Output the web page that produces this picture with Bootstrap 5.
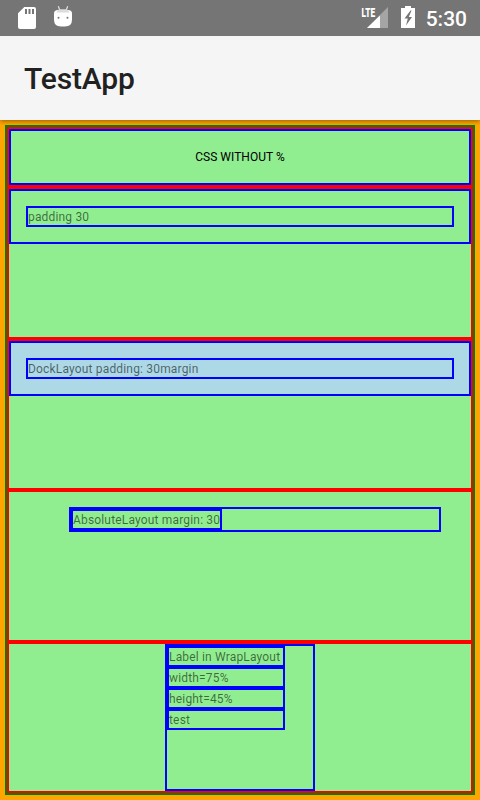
<!DOCTYPE html>
<html lang="en">
<head>
<meta charset="utf-8">
<meta name="viewport" content="width=device-width, initial-scale=1">
<title>TestApp</title>
<link href="https://cdn.jsdelivr.net/npm/bootstrap@5.3.0/dist/css/bootstrap.min.css" rel="stylesheet">
<style>
  body { font-family: Roboto, sans-serif; font-size: 12px; line-height: 17px; background: orange; color: #212121; }
  .screen { height: 800px; width: 480px; }
  .status-bar { height: 36px; background: #757575; z-index: 2; }
  .status-bar svg { display: block; }
  .clock { font-size: 21px; font-weight: 500; line-height: 38px; color: #fff; }
  .clock span { padding-right: 13px; }
  .app-bar { height: 84px; background: #f5f5f5; padding-left: 24px; padding-top: 2px; box-shadow: 0 1px 5px rgba(0,0,0,.45); }
  .app-title { font-size: 30px; font-weight: 500; line-height: 36px; letter-spacing: -.15px; }
  .page-area { padding: 5px; }
  .stack { border: 2px solid green; }
  .cell { border: 2px solid red; background: lightgreen; }
  .cell-button { height: 60px; }
  .cell-a { height: 152px; }
  .cell-b { height: 151px; }
  .outlined { border: 2px solid blue; }
  .btn-flat { width: 100%; height: 100%; padding: 0; background: none; font-size: 12px; line-height: 17px; letter-spacing: .04px; color: #000; }
  .inset { padding: 15px; }
  .dock { background: lightblue; }
  .lbl { height: 21px; line-height: 19px; letter-spacing: .17px; color: rgba(0,0,0,.57); white-space: nowrap; }
  .abs-box { margin: 15px 30px 0 60px; }
  .abs-box .lbl { width: 151px; }
  .wrap-box { width: 150px; height: 147px; }
  .wrap-box .lbl { width: 118px; }
</style>
<script defer src="https://cdn.jsdelivr.net/npm/bootstrap@5.3.0/dist/js/bootstrap.bundle.min.js"></script>
</head>
<body>
<div class="screen d-flex flex-column overflow-hidden">
  <div class="status-bar position-relative d-flex flex-shrink-0 justify-content-between">
    <svg width="90" height="36" viewBox="0 0 90 36" aria-hidden="true">
      <path fill="#fff" fill-rule="evenodd" d="M24.300 7H34a2 2 0 0 1 2 2v18a2 2 0 0 1-2 2H20a2 2 0 0 1-2-2V13.300zM25 9v5h2V9zM28.500 9v5h2V9zM32 9v5h2V9z"/>
      <path d="M58.300 6.200l1.500 4M67.700 6.200l-1.500 4" stroke="#e0e0e0" stroke-width="1.200" fill="none"/>
      <path fill="#fff" d="M54 13.500q0-3.500 4-3.500h10q4 0 4 3.500v6q0 7-7 7h-4q-7 0-7-7z"/>
      <path fill="#dcdcdc" d="M56.500 12.500q1-3.200 4-3.200h5q3 0 4 3.200z"/>
      <circle cx="58.500" cy="17.800" r="1" fill="#757575"/><circle cx="67.500" cy="17.800" r="1" fill="#757575"/>
    </svg>
    <div class="d-flex">
      <svg width="66" height="36" viewBox="360 0 66 36" aria-hidden="true">
        <path fill="#a5a5a5" d="M388 7v21h-21z"/>
        <path fill="#fff" d="M380 15.500V28H367z"/>
        <text x="361.600" y="16.500" font-size="13" font-weight="900" fill="#fff" stroke="#757575" stroke-width="2" paint-order="stroke" textLength="13.500" lengthAdjust="spacingAndGlyphs">LTE</text>
        <path fill="#fff" d="M401 8h4V6h6v2h4v20h-14z"/>
        <path fill="#757575" d="M410.500 10.500l-6 8h3.300l-1.800 7 6-8.500h-3.200l2.700-6.500z"/>
      </svg>
      <div class="clock"><span class="d-block">5:30</span></div>
    </div>
  </div>
  <header class="app-bar d-flex flex-shrink-0 align-items-center position-relative">
    <h1 class="app-title m-0">TestApp</h1>
  </header>
  <main class="page-area flex-grow-1">
    <div class="stack">
      <div class="cell cell-button"><button type="button" class="btn rounded-0 outlined btn-flat">CSS WITHOUT %</button></div>
      <div class="cell cell-a">
        <div class="outlined inset"><div class="outlined lbl">padding 30</div></div>
      </div>
      <div class="cell cell-b">
        <div class="outlined inset dock"><div class="outlined lbl">DockLayout padding: 30margin</div></div>
      </div>
      <div class="cell cell-a d-flex align-items-start">
        <div class="outlined abs-box flex-grow-1"><div class="outlined lbl">AbsoluteLayout margin: 30</div></div>
      </div>
      <div class="cell cell-b">
        <div class="outlined wrap-box d-flex flex-column mx-auto">
          <div class="outlined lbl">Label in WrapLayout</div>
          <div class="outlined lbl">width=75%</div>
          <div class="outlined lbl">height=45%</div>
          <div class="outlined lbl">test</div>
        </div>
      </div>
    </div>
  </main>
</div>
</body>
</html>
